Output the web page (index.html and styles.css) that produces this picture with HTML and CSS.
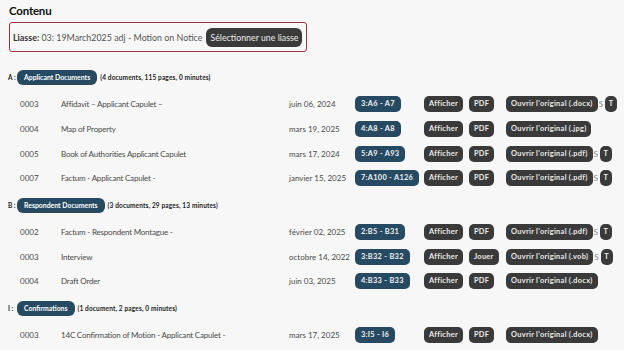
FILE: index.html
```html
<!DOCTYPE html>
<html lang="fr">
<head>
<meta charset="utf-8">
<title>Contenu</title>
<link rel="stylesheet" href="styles.css">
</head>
<body>
<main class="page">
  <h2 class="title">Contenu</h2>
  <div class="liasse">
    <span class="liasse-text"><b>Liasse:</b> 03: 19March2025 adj - Motion on Notice</span>
    <button class="btn btn-select">Sélectionner une liasse</button>
  </div>

  <section class="section">
    <div class="sec-head"><span class="sec-letter">A :</span><span class="sec-badge">Applicant Documents</span><span class="sec-stats">(4 documents, 115 pages, 0 minutes)</span></div>
    <div class="row">
      <span class="num">0003</span><span class="doc">Affidavit – Applicant Capulet –</span><span class="date">juin 06, 2024</span>
      <span class="cell"><span class="ref">3:A6 - A7</span></span>
      <span class="cell"><button class="btn">Afficher</button></span>
      <span class="cell"><button class="btn">PDF</button></span>
      <span class="cell tail"><button class="btn">Ouvrir l'original (.docx)</button><span class="s">S</span><button class="btn btn-t">T</button></span>
    </div>
    <div class="row">
      <span class="num">0004</span><span class="doc">Map of Property</span><span class="date">mars 19, 2025</span>
      <span class="cell"><span class="ref">4:A8 - A8</span></span>
      <span class="cell"><button class="btn">Afficher</button></span>
      <span class="cell"><button class="btn">PDF</button></span>
      <span class="cell tail"><button class="btn">Ouvrir l'original (.jpg)</button></span>
    </div>
    <div class="row">
      <span class="num">0005</span><span class="doc">Book of Authorities Applicant Capulet</span><span class="date">mars 17, 2024</span>
      <span class="cell"><span class="ref">5:A9 - A93</span></span>
      <span class="cell"><button class="btn">Afficher</button></span>
      <span class="cell"><button class="btn">PDF</button></span>
      <span class="cell tail"><button class="btn">Ouvrir l'original (.pdf)</button><span class="s">S</span><button class="btn btn-t">T</button></span>
    </div>
    <div class="row">
      <span class="num">0007</span><span class="doc">Factum - Applicant Capulet -</span><span class="date">janvier 15, 2025</span>
      <span class="cell"><span class="ref">7:A100 - A126</span></span>
      <span class="cell"><button class="btn">Afficher</button></span>
      <span class="cell"><button class="btn">PDF</button></span>
      <span class="cell tail"><button class="btn">Ouvrir l'original (.pdf)</button><span class="s">S</span><button class="btn btn-t">T</button></span>
    </div>
  </section>

  <section class="section">
    <div class="sec-head"><span class="sec-letter">B :</span><span class="sec-badge">Respondent Documents</span><span class="sec-stats">(3 documents, 29 pages, 13 minutes)</span></div>
    <div class="row">
      <span class="num">0002</span><span class="doc">Factum - Respondent Montague -</span><span class="date">février 02, 2025</span>
      <span class="cell"><span class="ref">2:B5 - B31</span></span>
      <span class="cell"><button class="btn">Afficher</button></span>
      <span class="cell"><button class="btn">PDF</button></span>
      <span class="cell tail"><button class="btn">Ouvrir l'original (.pdf)</button><span class="s">S</span><button class="btn btn-t">T</button></span>
    </div>
    <div class="row">
      <span class="num">0003</span><span class="doc">Interview</span><span class="date">octobre 14, 2022</span>
      <span class="cell"><span class="ref">3:B32 - B32</span></span>
      <span class="cell"><button class="btn">Afficher</button></span>
      <span class="cell"><button class="btn">Jouer</button></span>
      <span class="cell tail"><button class="btn">Ouvrir l'original (.vob)</button><span class="s">S</span><button class="btn btn-t">T</button></span>
    </div>
    <div class="row">
      <span class="num">0004</span><span class="doc">Draft Order</span><span class="date">juin 03, 2025</span>
      <span class="cell"><span class="ref">4:B33 - B33</span></span>
      <span class="cell"><button class="btn">Afficher</button></span>
      <span class="cell"><button class="btn">PDF</button></span>
      <span class="cell tail"><button class="btn">Ouvrir l'original (.docx)</button></span>
    </div>
  </section>

  <section class="section">
    <div class="sec-head"><span class="sec-letter">I :</span><span class="sec-badge">Confirmations</span><span class="sec-stats">(1 document, 2 pages, 0 minutes)</span></div>
    <div class="row">
      <span class="num">0003</span><span class="doc">14C Confirmation of Motion - Applicant Capulet -</span><span class="date">mars 17, 2025</span>
      <span class="cell"><span class="ref">3:I5 - I6</span></span>
      <span class="cell"><button class="btn">Afficher</button></span>
      <span class="cell"><button class="btn">PDF</button></span>
      <span class="cell tail"><button class="btn">Ouvrir l'original (.docx)</button></span>
    </div>
  </section>
</main>
</body>
</html>
```

FILE: styles.css
```css
html, body {
  margin: 0;
  padding: 0;
  background: #f7f7f7;
}
body {
  font-family: Lato, "Liberation Sans", sans-serif;
  color: #4a4a4a;
  width: 624px;
  height: 350px;
  overflow: hidden;
}
.page {
  padding: 3px 8px 0 8px;
}
.title {
  margin: 0 0 0 1px;
  font-size: 11.5px;
  line-height: 15px;
  font-weight: 700;
  letter-spacing: -0.2px;
  color: #111;
}
.liasse {
  display: inline-flex;
  align-items: center;
  gap: 4px;
  margin-top: 4px;
  margin-left: 1px;
  padding: 4.7px 4px 4.7px 3px;
  border: 1.5px solid #a2303f;
  border-radius: 3px;
}
.liasse-text {
  font-size: 8.9px;
  color: #555;
}
.liasse-text b {
  color: #333;
  font-weight: 700;
}
.btn {
  font-family: inherit;
  border: 0;
  margin: 0;
  background: #3a3a3a;
  color: #ececec;
  font-weight: 700;
  font-size: 7.4px;
  letter-spacing: 0.3px;
  height: 16px;
  line-height: 16px;
  padding: 0 5px;
  border-radius: 5px;
  white-space: nowrap;
}
.btn-select {
  font-size: 8.8px;
  font-weight: 400;
  letter-spacing: 0;
  height: 19px;
  line-height: 19px;
  padding: 0 4px;
  border-radius: 6px;
}
.section {
  display: flex;
  flex-direction: column;
}
.section:first-of-type {
  margin-top: 10.5px;
}
.sec-head {
  height: 29px;
  display: flex;
  align-items: center;
  font-size: 6.5px;
  font-weight: 700;
  color: #222;
}
.sec-letter {
  width: 9px;
}
.sec-badge {
  background: #264a62;
  color: #fff;
  font-size: 6.9px;
  height: 15px;
  line-height: 15px;
  padding: 0 7px;
  border-radius: 6px;
  margin-right: 3px;
}
.sec-stats {
  letter-spacing: 0.15px;
}
.row {
  height: 24.7px;
  display: grid;
  grid-template-columns: 41px 228px 66px 69px 45px 37px auto;
  align-items: center;
  padding-left: 12px;
  font-size: 8px;
  white-space: nowrap;
}
.doc {
  letter-spacing: -0.2px;
}
.cell {
  display: flex;
  align-items: center;
}
.ref {
  background: #264a62;
  color: #f2f2f2;
  font-weight: 700;
  font-size: 7.4px;
  height: 16px;
  line-height: 16px;
  padding: 0 6px;
  border-radius: 5px;
  letter-spacing: 0.3px;
}
.tail .s {
  color: #888;
  font-size: 8.4px;
  margin: 0 2px 0 1px;
}
.btn-t {
  padding: 0 3.5px;
}
```
